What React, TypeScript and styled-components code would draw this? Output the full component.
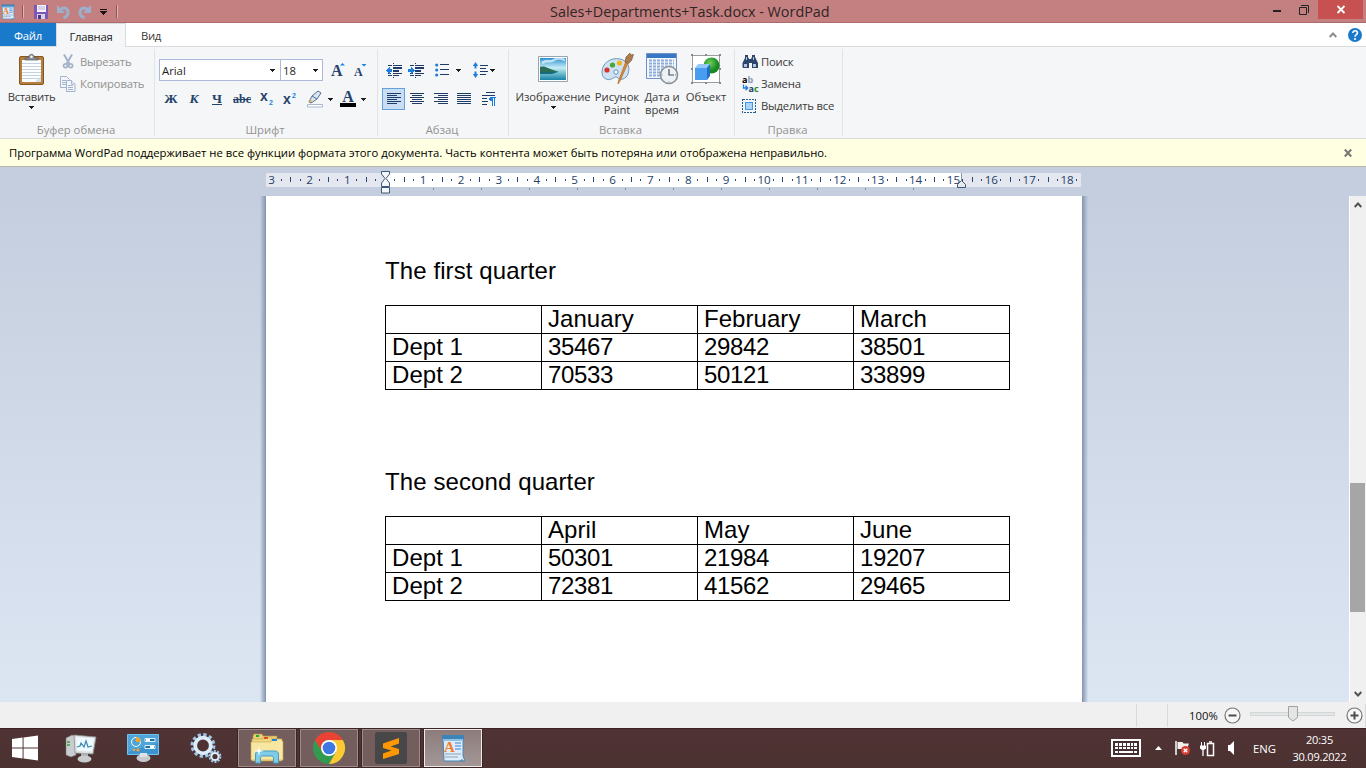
import React from "react";
import styled, { createGlobalStyle, css } from "styled-components";

const GlobalStyle = createGlobalStyle`
  * { box-sizing: border-box; }
  html, body { margin: 0; height: 100%; overflow: hidden; }
  body { font-family: "Open Sans", "Noto Sans", sans-serif; font-size: 11.3px; color: #222; }
  svg { display: block; flex: none; overflow: visible; }
`;

const Window = styled.div`
  display: flex; flex-direction: column; width: 1366px; height: 768px; overflow: hidden; background: #fff;
`;

/* Title bar */
const TitleBar = styled.header`
  display: flex; flex: none; height: 23px; background: #c48080; border-bottom: 1px solid #ad6b6c;
`;
const QuickAccess = styled.div`
  display: flex; align-items: center; width: 550px; padding: 1px 0 0 1px;
`;
const QuickItem = styled.div<{ $gap?: number }>`
  margin-left: ${(p) => p.$gap ?? 0}px;
`;
const QuickDivider = styled.i<{ $gap: number }>`
  width: 2px; height: 13px; margin: 0 0 1px ${(p) => p.$gap}px; background: #8f5556; border-right: 1px solid #e0b4b4;
`;
const WindowTitle = styled.div`
  flex: 1; padding-top: 1px; font-size: 14.4px; line-height: 22px; color: #2e2526; white-space: nowrap;
`;
const CaptionButton = styled.div<{ $width: number; $close?: boolean }>`
  display: flex; align-items: center; justify-content: center; width: ${(p) => p.$width}px;
  height: 19px; background: ${(p) => (p.$close ? "#c75050" : "transparent")};
  margin-right: ${(p) => (p.$close ? 3 : 0)}px;
`;

/* Tabs */
const TabBar = styled.nav`
  display: flex; flex: none; height: 24px; background: #fff; border-bottom: 1px solid #dadbdc;
`;
const Tab = styled.div<{ $width: number; $kind?: "file" | "active" }>`
  display: flex; align-items: center; justify-content: center; width: ${(p) => p.$width}px; height: 23px;
  padding-top: 2px; color: #3b3b3b; letter-spacing: -0.25px;
  ${(p) => p.$kind === "file" && css`background: #1979ca; color: #fff;`}
  ${(p) => p.$kind === "active" && css`
    height: 24px; padding: 1px 0 0; background: #f5f6f7; border: 1px solid #dadbdc; border-width: 1px 1px 0; color: #222;
  `}
`;
const TabTools = styled.div`
  display: flex; align-items: center; gap: 11px; margin-left: auto; padding-right: 4px;
`;

/* Ribbon */
const Ribbon = styled.section`
  display: flex; flex: none; height: 92px; background: #f5f6f7; border-bottom: 1px solid #d9dadc;
`;
const Group = styled.div<{ $width: number }>`
  display: flex; flex-direction: column; width: ${(p) => p.$width}px; height: 87px;
  margin-top: 2px; border-right: 1px solid #e2e3e4;
`;
const GroupBody = styled.div<{ $pad?: number }>`
  display: flex; height: 74px; padding-left: ${(p) => p.$pad ?? 0}px;
`;
const GroupTitle = styled.div`
  padding-right: 2px; line-height: 13px; text-align: center; color: #929292;
`;
const BigButton = styled.div<{ $width: number; $tight?: boolean }>`
  display: flex; flex-direction: column; align-items: center; width: ${(p) => p.$width}px;
  line-height: 13px; text-align: center; white-space: nowrap; color: #3b3b3b;
  letter-spacing: ${(p) => (p.$tight ? -0.3 : -0.08)}px;
`;
const BigIcon = styled.div`
  display: flex; align-items: center; justify-content: center; height: 41px; padding-bottom: 1px;
`;
const BigArrow = styled.div`
  padding-top: 3px;
`;
const SmallList = styled.div<{ $gap?: number }>`
  display: flex; flex-direction: column; padding-top: 2px; margin-left: ${(p) => p.$gap ?? 0}px;
`;
const SmallButton = styled.div<{ $disabled?: boolean; $space: number }>`
  display: flex; align-items: center; height: 22px; gap: ${(p) => p.$space}px; padding-bottom: 1px;
  white-space: nowrap; letter-spacing: -0.2px; color: ${(p) => (p.$disabled ? "#929292" : "#3b3b3b")};
`;
const ToolRows = styled.div`
  display: flex; flex-direction: column; padding-top: 10px; gap: 7px;
`;
const ToolRow = styled.div`
  display: flex; align-items: center; height: 22px;
`;
const Combo = styled.div<{ $width: number; $end: number }>`
  display: flex; align-items: center; justify-content: space-between; width: ${(p) => p.$width}px; height: 22px;
  margin-right: -1px; padding: 0 ${(p) => p.$end}px 0 2px; border: 1px solid #abbad8; background: #fff; color: #1e1e1e;
`;
const Tool = styled.div<{ $width: number; $gap?: number; $on?: boolean }>`
  display: flex; align-items: center; justify-content: center; flex: none;
  width: ${(p) => p.$width}px; height: 22px; margin-left: ${(p) => p.$gap ?? 0}px;
  ${(p) => p.$on && css`background: #c9def5; border: 1px solid #66a1dc;`}
`;
const Glyph = styled.span<{ $size?: number; $italic?: boolean; $line?: "underline" | "line-through" }>`
  font: ${(p) => (p.$italic ? "italic" : "normal")} bold ${(p) => p.$size ?? 13.5}px/16px "Liberation Serif", serif;
  color: #24426b; text-decoration: ${(p) => p.$line ?? "none"}; text-decoration-thickness: 1px;
`;

/* Notice */
const Notice = styled.div`
  display: flex; flex: none; align-items: center; justify-content: space-between; height: 28px;
  padding: 0 14px 0 9px; background: #ffffe1; border-bottom: 1px solid #b5b5a2; color: #000; white-space: nowrap;
`;

/* Ruler */
const RulerBar = styled.div`
  flex: none; height: 29px; padding: 6px 0 0 266px; background: #c5cede;
`;
const RulerTrack = styled.div`
  width: 815px; height: 14px; overflow: hidden;
  background: linear-gradient(90deg, #e4e7ef 119px, #fff 119px 695px, #e4e7ef 695px);
`;
const RulerCells = styled.div`
  display: flex; width: 900px; margin-left: -18px;
`;
const RulerCell = styled.div`
  display: grid; grid-template-columns: repeat(4, 1fr); align-items: center; justify-items: center;
  flex: none; width: 37.88px; height: 13px;
`;
const RulerTick = styled.i<{ $tall?: boolean }>`
  width: 1px; height: ${(p) => (p.$tall ? 5 : 2)}px; background: #2b466f;
`;
const RulerNumber = styled.span`
  display: flex; justify-content: center; width: 0; font-size: 11.6px; line-height: 13px; color: #24426b;
`;
const TabStops = styled.div`
  display: flex; gap: 47px; padding: 1px 0 0 167px;
`;
const TabStop = styled.i`
  width: 1px; height: 2px; background: #8291aa;
`;
const RulerWrap = styled.div`
  position: relative; width: 815px;
`;
const Marker = styled.div<{ $x: number; $y: number }>`
  position: absolute; left: ${(p) => p.$x}px; top: ${(p) => p.$y}px;
`;

/* Document */
const Workspace = styled.main`
  display: flex; flex: 1; min-height: 0; background: linear-gradient(#c5cede, #dce6f3);
`;
const PageArea = styled.div`
  display: flex; flex: 1; padding-left: 260px;
`;
const PageEdge = styled.i<{ $side: "left" | "right" }>`
  width: 6px;
  background: linear-gradient(to ${(p) => p.$side}, #8494ad, rgba(146, 163, 188, 0.8) 40%, rgba(180, 194, 214, 0.1));
`;
const Page = styled.article`
  width: 816px; padding: 61px 0 0 119px; background: #fff; color: #000;
  font-family: "Liberation Sans", Arial, sans-serif; font-size: 24px;
`;
const Heading = styled.p<{ $gap?: number }>`
  margin: ${(p) => p.$gap ?? 0}px 0 20px; line-height: 28px; letter-spacing: 0.1px;
`;
const Table = styled.div`
  display: grid; grid-template-columns: repeat(4, 156px); width: 625px;
  border-top: 1px solid #000; border-left: 1px solid #000;
`;
const Cell = styled.div<{ $numeric: boolean }>`
  height: 28px; padding-left: 6px; line-height: 25px; border-right: 1px solid #000; border-bottom: 1px solid #000;
  letter-spacing: ${(p) => (p.$numeric ? -0.35 : 0.05)}px;
`;
const ScrollBar = styled.aside`
  display: flex; flex-direction: column; align-items: center; justify-content: space-between;
  width: 17px; padding: 6px 1px 5px 0; background: #f0f0f0; border-left: 1px solid #fff;
`;
const ScrollSpace = styled.div`
  flex: 1; width: 15px; padding-top: 275px;
`;
const Thumb = styled.div`
  height: 129px; background: #a6a6a6;
`;

/* Status bar */
const StatusBar = styled.footer`
  display: flex; flex: none; align-items: center; justify-content: flex-end; height: 26px; background: #f0f0f0;
`;
const StatusDivider = styled.i<{ $before?: number; $after: number }>`
  width: 1px; height: 23px; margin: 0 ${(p) => p.$after}px 0 ${(p) => p.$before ?? 0}px; background: #d9d9d9;
`;
const ZoomText = styled.span`
  width: 35px; color: #111;
`;
const ZoomSlider = styled.div`
  position: relative; width: 85px; height: 4px; margin: 0 11px 2px 9px; background: #e3e7e8; border: 1px solid #d2d6d7;
`;
const ZoomThumb = styled.div`
  position: absolute; left: 37px; top: -7px;
`;

/* Taskbar */
const Taskbar = styled.footer`
  display: flex; flex: none; height: 40px; background: linear-gradient(#3b2325 1px, #503435 1px, #4c3131);
`;
const Launcher = styled.div<{ $width: number }>`
  display: flex; align-items: center; justify-content: center; width: ${(p) => p.$width}px; height: 40px;
`;
const TaskButton = styled.div<{ $active?: boolean }>`
  display: flex; align-items: center; justify-content: center; width: 58px; height: 38px; margin: 1px 4px 0 0;
  border: 1px solid ${(p) => (p.$active ? "#efeaea" : "#9c8c8c")};
  background: ${(p) => (p.$active ? "linear-gradient(#8d7c7c, #a39797)" : "#735d5d")};
  box-shadow: 0 0 0 1px #3d2526;
`;
const Tray = styled.div`
  display: flex; align-items: center; margin-left: auto; padding-right: 19px; color: #fff;
`;
const TrayItem = styled.div<{ $gap: number }>`
  margin-left: ${(p) => p.$gap}px;
`;
const Clock = styled.div`
  display: flex; flex-direction: column; width: 55px; margin-left: 16px; line-height: 17px; text-align: center;
  font-size: 11px; letter-spacing: -0.2px; white-space: nowrap;
`;

const navy = "#1f3b66";
const blue = "#1c7fe0";

const Caret = () => (
  <svg width="5" height="3" viewBox="0 0 5 3" shapeRendering="crispEdges"><path d="M0 0h5v1H4v1H3v1H2V2H1V1H0z" fill="#1e1e1e" /></svg>
);
const DocIcon = ({ w, h }: { w: number; h: number }) => (
  <svg width={w} height={h} viewBox="0 0 24 29" preserveAspectRatio="none">
    <path d="M2 2h20v20l2 5H3z" fill="#dcecf9" stroke="#4a87b8" strokeWidth="1" />
    <path d="M1 1h22v4H1z" fill="#3f84b9" /><path d="M2 5h20v2H2z" fill="#8fc1e4" />
    <path d="M14 9h6M14 12h6M14 15h6" stroke="#3b83d8" strokeWidth="1.2" />
    <path d="M4 20h16M4 23h13" stroke="#8ea3ba" strokeWidth="1.2" />
    <path d="M3 27h20l-2-2-3 2z" fill="#5790bb" />
    <text x="3" y="18" fontFamily="Liberation Serif" fontWeight="bold" fontSize="15" fill="#f0802c">A</text>
  </svg>
);
const SaveIcon = () => (
  <svg width="14" height="14" viewBox="0 0 14 14">
    <path d="M0 0h14v14H1l-1-1z" fill="#7c57b5" /><path d="M3 0h9v7H3z" fill="#f4f2fa" />
    <path d="M4 2h7M4 4h7" stroke="#b9b2d2" /><path d="M3 9h8v5H3z" fill="#d7d3e4" /><path d="M4 10h3v4H4z" fill="#4e3684" />
  </svg>
);
const UndoIcon = ({ flip }: { flip?: boolean }) => (
  <svg width="13" height="14" viewBox="0 0 13 14">
    <g transform={flip ? "translate(13 0) scale(-1 1)" : undefined}>
      <path d="M3.5 5C6 2 11 2.500 11 7.500 11 10 9.500 12 6.500 12.800" fill="none" stroke="#9db0cb" strokeWidth="3" />
      <path d="M0 0v8h8z" fill="#9db0cb" />
    </g>
  </svg>
);
const PasteIcon = () => (
  <svg width="25" height="31" viewBox="0 0 25 31">
    <rect x=".5" y="2.500" width="24" height="28" rx="1.500" fill="#b5803f" stroke="#85561f" />
    <path d="M3 6h19v22H3z" fill="#fdfeff" />
    <path d="M3 9.500h19M3 12.500h19M3 15.500h19M3 18.500h19M3 21.500h19M3 24.500h19" stroke="#c4d2df" />
    <path d="M16 28l6-6v6z" fill="#d5dee6" />
    <path d="M6 6V4h3.500c0-5 6-5 6 0H19v2z" fill="#8b9299" stroke="#4f555b" strokeWidth=".7" /><circle cx="12.500" cy="2.800" r="1.200" fill="#fff" />
  </svg>
);
const CutIcon = () => (
  <svg width="16" height="15" viewBox="0 0 16 15" fill="none" stroke="#a3b3cb">
    <path d="M4 0.500l5.500 9.500M12 .5L6.500 10" strokeWidth="2" /><circle cx="5.500" cy="11.800" r="1.900" strokeWidth="1.700" /><circle cx="10.700" cy="11.800" r="1.900" strokeWidth="1.700" />
  </svg>
);
const CopyIcon = () => (
  <svg width="16" height="16" viewBox="0 0 16 16" fill="#f3f6fa" stroke="#a3b3cb">
    <path d="M.5.500h6l3 3v8h-9z" /><path d="M2 4.500h4M2 6.500h4M2 8.500h4" />
    <path d="M6.500 4.500h5l3.500 3.500v7.500H6.500z" /><path d="M8 9.500h5M8 11.500h5M8 13.500h5M11.500 4.500V8H15" />
  </svg>
);
const LineIcon = ({ indent, len }: { indent: number; len: number }) => (
  <svg width="14" height="12" viewBox="0 0 14 12" shapeRendering="crispEdges" fill={navy}>
    <path d="M0 0h14v1H0zM0 4h14v1H0zM0 8h14v1H0z" />
    {[2, 6, 10].map((y) => <rect key={y} x={indent} y={y} width={len} height="1" />)}
  </svg>
);
const IndentIcon = ({ right }: { right?: boolean }) => (
  <svg width="16" height="15" viewBox="0 0 16 15" shapeRendering="crispEdges">
    <path d="M7 0h1v1H7zM7 14h1v1H7zM2 2h4v1H2zM2 12h4v1H2zM7 2h9v1H7zM7 4h9v2H7zM7 7h6v2H7zM7 10h9v1H7zM7 12h6v1H7zM2 10h3v1H2z" fill={navy} />
    <path d={right ? "M0 6h3V4h1v1h1v1h1v1h1v1H6v1H5v1H4v1H3V9H0z" : "M6 6H4V4H3v1H2v1H1v1H0v1h1v1h1v1h1v1h1V9h2z"} fill={blue} />
  </svg>
);
const BulletsIcon = () => (
  <svg width="14" height="14" viewBox="0 0 14 14"><g fill={blue}><circle cx="1.700" cy="2" r="1.600" /><circle cx="1.700" cy="7" r="1.600" /><circle cx="1.700" cy="12" r="1.600" /></g><path d="M5 1.500h9M5 6.500h9M5 11.500h9" stroke={navy} /></svg>
);
const SpacingIcon = () => (
  <svg width="15" height="16" viewBox="0 0 15 16"><path d="M2.500 0L5.200 4H3.500v2.500h-2V4H-.2zM2.500 16L5.200 12H3.500V9.500h-2V12H-.2z" fill={blue} /><path d="M7 3.500h8M7 6.500h6M7 9.500h8M7 12.500h6" stroke={navy} /></svg>
);
const ParagraphIcon = () => (
  <svg width="14" height="14" viewBox="0 0 14 14" shapeRendering="crispEdges"><path d="M4 .5h9M0 3.500h13M0 6.500h5M0 9.500h6M0 12.500h5" stroke={navy} /><path d="M8 5h6v1h-1v8h-1V6h-1v8h-1V9H8V8H7V6h1z" fill={blue} /></svg>
);
const ScriptIcon = ({ up }: { up?: boolean }) => (
  <svg width="13" height="14" viewBox="0 0 13 14">
    <text x="0" y={up ? 12 : 9} fontFamily="Liberation Sans" fontWeight="bold" fontSize="14" fill="#24426b">x</text>
    <text x="9" y={up ? 6 : 13} fontFamily="Liberation Sans" fontWeight="bold" fontSize="7" fill={blue}>2</text>
  </svg>
);
const GrowIcon = ({ down }: { down?: boolean }) => (
  <svg width="15" height="16" viewBox="0 0 15 16">
    <text x={down ? 1 : 0} y="14" fontFamily="Liberation Serif" fontWeight="bold" fontSize={down ? 12 : 16} fill="#24426b">A</text>
    <path d={down ? "M8.500 2h5L11 4.500z" : "M9 3.500h5L11.500 1z"} fill={blue} />
  </svg>
);
const PenIcon = () => (
  <svg width="16" height="17" viewBox="0 0 16 17">
    <path d="M2 11l3-6 6-5 3 2-4 6-6 4z" fill="#dce6f1" stroke="#526e96" /><path d="M5 5l5 3" stroke="#526e96" /><path d="M1.500 11.500l2-3 2 2z" fill="#e8b52e" />
    <path d="M.5 13.500h15v2.500H.5z" fill="#fff" stroke="#a7b7cf" />
  </svg>
);
const FontColorIcon = () => (
  <svg width="16" height="16" viewBox="0 0 16 16"><text x="2.200" y="11" fontFamily="Liberation Serif" fontWeight="bold" fontSize="16" fill="#24426b">A</text><path d="M0 12h16v4H0z" /></svg>
);
const PictureIcon = () => (
  <svg width="30" height="26" viewBox="0 0 30 26">
    <defs>
      <linearGradient id="sky" x2="0" y2="1"><stop stopColor="#2b90d2" /><stop offset=".45" stopColor="#c9edf8" /><stop offset=".6" stopColor="#8ed1dc" /><stop offset="1" stopColor="#1782a8" /></linearGradient>
    </defs>
    <path d="M.5.500h29v25H.5z" fill="#fff" stroke="#99a5ae" /><path d="M2 2h26v22H2z" fill="url(#sky)" />
    <path d="M2 11c4-1 5 0 8 1s7 3 11 4H2z" fill="#2a6c55" /><path d="M2 16h18l-6 2H2z" fill="#17697c" />
    <path d="M4 7c5-4 8 0 12-3s8-1 11 0" fill="none" stroke="#e9f8ff" strokeWidth="2.500" opacity=".7" />
  </svg>
);
const PaletteIcon = () => (
  <svg width="33" height="32" viewBox="0 0 33 32">
    <path d="M1 19C1 10 10 4 19 6c9 2 10 9 8 15-2 5-8 7-10 4-2-4-7 4-12 1-3-1-4-4-4-7z" fill="#cfe2f3" stroke="#6f98be" />
    <circle cx="6" cy="17" r="2.600" fill="#d9342b" /><circle cx="11.500" cy="12" r="2.600" fill="#43a93a" /><circle cx="18.500" cy="10" r="2.600" fill="#f0b323" /><circle cx="15" cy="19" r="2.200" fill="#fff" stroke="#5b8dbb" />
    <path d="M27 10L18.500 29l-1.500 2 .5-3L25 8z" fill="#dc8a35" stroke="#b2661f" strokeWidth=".7" /><path d="M24 9l1-5 4-4 .5 2 3-.5-2 6-3 3z" fill="#aa7c50" stroke="#77512e" strokeWidth=".6" />
  </svg>
);
const DateIcon = () => (
  <svg width="32" height="32" viewBox="0 0 32 32">
    <path d="M.5.500h30v25H.5z" fill="#f2f7fd" stroke="#6f91c4" /><path d="M1 1h29v4H1z" fill="#3977c5" />
    <path d="M3 7.500h25M3 10.500h25M3 13.500h25M3 16.500h25M3 19.500h25M3 22.500h25" stroke="#8fabd7" strokeWidth="1.800" strokeDasharray="3 1" />
    <circle cx="23" cy="22" r="8.500" fill="#eef2f5" stroke="#88929b" strokeWidth="1.600" /><path d="M23 16v6h5" fill="none" stroke="#43505b" strokeWidth="1.200" /><path d="M23 28.500v1M16.500 22h-1M30 22h-1" stroke="#777" />
  </svg>
);
const ObjectIcon = () => (
  <svg width="30" height="30" viewBox="0 0 30 30">
    <defs><radialGradient id="ball" cx=".4" cy=".35"><stop stopColor="#72cf5e" /><stop offset="1" stopColor="#158a20" /></radialGradient></defs>
    <path d="M1.500 1.500h27v27h-27z" fill="#fff" stroke="#9c9c9c" />
    <circle cx="20.500" cy="11.500" r="8" fill="url(#ball)" />
    <path d="M4 14h12v12H4z" fill="#499df0" /><path d="M4 14l3-4h12l-3 4z" fill="#91c8f8" /><path d="M16 14l3-4v12l-3 4z" fill="#1f6fc3" />
    <g fill="#888"><path d="M0 0h2v2H0zM28 0h2v2h-2zM0 28h2v2H0zM28 28h2v2h-2zM14 0h2v2h-2zM14 28h2v2h-2zM0 14h2v2H0zM28 14h2v2h-2z" /></g>
  </svg>
);
const FindIcon = () => (
  <svg width="16" height="13" viewBox="0 0 16 13"><path d="M3 0h3v2l1 2h2l1-2V0h3v2l3 6v5h-6V8H7v5H1l-.5-1V8L3 3z" fill="#2d456c" /><path d="M2 9h3v3H2zM11 9h3v3h-3zM4 2h1v3H4zM11 2h1v3h-1z" fill="#b5c6de" /></svg>
);
const ReplaceIcon = () => (
  <svg width="17" height="16" viewBox="0 0 17 16" fontFamily="Open Sans" fontWeight="bold" fontSize="9">
    <text x="0" y="7">a</text><text x="5.500" y="7" fill="#8b9bb1">b</text>
    <text x="6.500" y="15.500" fill="#24426b">a</text><text x="12" y="15.500" fill="#248c32">c</text>
    <path d="M1.500 8.500v3.500H5M3.500 9.800L5.800 12 3.500 14.200" fill="none" stroke={blue} strokeWidth="1.300" />
  </svg>
);
const SelectIcon = () => (
  <svg width="14" height="14" viewBox="0 0 14 14" shapeRendering="crispEdges"><path d="M.5.500h13v13H.5z" fill="none" stroke="#285d91" strokeDasharray="2 1" /><path d="M3.500 3.500h7v7h-7z" fill="#a8d5fb" stroke="#4696e0" /></svg>
);

const StartIcon = () => (
  <svg width="26" height="26" viewBox="0 0 27 26" fill="#fff"><path d="M0 3.700l11-1.600v10.400H0zM12 2l15-2v12.500H12zM0 13.500h11v10.300L0 22.300zM12 13.500h15V26l-15-2z" /></svg>
);
const MonitorIcon = () => (
  <svg width="31" height="29" viewBox="0 0 31 29">
    <path d="M0 4l6-3 4 1v19l-5 2-5-2z" fill="#c9cdd0" stroke="#777" strokeWidth=".5" /><path d="M1 8h3M1 11h3" stroke="#3ea33d" strokeWidth="1.500" />
    <path d="M8 1l22 2-3 17-18-1z" fill="#dfe2e3" stroke="#888f92" strokeWidth=".8" /><path d="M10 3l18 1.500-2 13L11 16.500z" fill="#eefaff" />
    <path d="M11 13l3-1 1-3 3 4 2-6 2 6 4-1" fill="none" stroke="#3b87ac" strokeWidth="1.200" />
    <path d="M15 19h7v4h-7z" fill="#aaafb1" /><ellipse cx="18.500" cy="25" rx="7" ry="3.500" fill="#c8cccd" />
  </svg>
);
const PanelIcon = () => (
  <svg width="33" height="28" viewBox="0 0 33 28">
    <path d="M.5.500h31v20H.5z" fill="#3b94cd" stroke="#70c1ed" /><path d="M1 1h30v8L1 18z" fill="#5cb0df" opacity=".6" />
    <circle cx="9" cy="8" r="4.500" fill="#4fa5d9" stroke="#fff" /><path d="M9 8V3a5 5 0 015 5z" fill="#f6a52a" />
    <path d="M18 4.500h10v3H18zM18 11.500h10v3H18z" fill="#246e9e" stroke="#d9f0ff" /><path d="M19 5h4v2h-4zM23 12h4v2h-4z" fill="#fff" />
    <circle cx="7" cy="16" r="1.200" fill="#f3a43b" /><circle cx="11" cy="16" r="1.600" fill="#f3a43b" />
    <ellipse cx="16.500" cy="24" rx="7" ry="4" fill="#c6cacc" /><path d="M13 19h7v4h-7z" fill="#dfe2e3" />
  </svg>
);
const GearsIcon = () => (
  <svg width="32" height="30" viewBox="0 0 32 30" fill="none">
    <circle cx="13" cy="12.500" r="10.700" stroke="#9dc6e6" strokeWidth="3.500" strokeDasharray="3.200 2.400" /><circle cx="13" cy="12.500" r="7.800" stroke="#dcecf8" strokeWidth="3.800" />
    <circle cx="25" cy="23.500" r="5.300" stroke="#9dc6e6" strokeWidth="2.200" strokeDasharray="2.100 1.200" /><circle cx="25" cy="23.500" r="3.600" stroke="#dcecf8" strokeWidth="2" />
  </svg>
);
const ExplorerIcon = () => (
  <svg width="33" height="29" viewBox="0 0 33 29">
    <path d="M2 2l1-2h8l1 2h14v20H2z" fill="#ebce72" stroke="#b59545" strokeWidth=".6" /><path d="M5 1h3v2H5z" fill="#17a94b" />
    <path d="M1 5h11l1-2h7l1 2h10v22H1z" fill="#f0d780" stroke="#c5a34d" strokeWidth=".6" /><path d="M13 3h4v2h-4z" fill="#d94c35" />
    <path d="M0 8h20l1-3h9l2 3v18H0z" fill="#f7e7a2" stroke="#c8a952" strokeWidth=".6" /><path d="M21 5h5v2h-5z" fill="#2586d6" />
    <path d="M4.500 29V21c0-3 1-4 4-4h15c3 0 4 1 4 4v8h-5v-5c0-1-1-2-2-2h-9c-1 0-2 1-2 2v5z" fill="#7fcce9" stroke="#459dc5" />
    <path d="M8 12l.8 4 4.200 1-4.200 1L8 22l-.8-4L3 17l4.200-1z" fill="#fff" />
  </svg>
);
const ChromeIcon = () => (
  <svg width="32" height="32" viewBox="0 0 32 32">
    <circle cx="16" cy="16" r="16" fill="#349a50" />
    <path d="M29.860 8H16a8 8 0 00-6.930 12L2.140 8a16 16 0 0127.720 0z" fill="#ea4335" />
    <path d="M22.930 20L16 32a16 16 0 0013.860-24H16z" fill="#fcc934" />
    <circle cx="16" cy="16" r="8" fill="#fff" /><circle cx="16" cy="16" r="6.300" fill="#3f78e2" />
  </svg>
);
const SublimeIcon = () => (
  <svg width="32" height="32" viewBox="0 0 32 32"><rect width="32" height="32" rx="2.500" fill="#474747" /><path d="M8 11.500L24 6v5.500L15.500 14.500 24 17v5L8 27v-5.500l8.500-3L8 16z" fill="#ff9800" /></svg>
);
const KeyboardIcon = () => (
  <svg width="30" height="18" viewBox="0 0 30 18" shapeRendering="crispEdges"><path d="M1 1h28v16H1z" fill="#453031" stroke="#fff" strokeWidth="2" /><path d="M4 4h3v3H4zM8 4h3v3H8zM12 4h3v3h-3zM16 4h3v3h-3zM20 4h2v3h-2zM23 4h3v3h-3zM4 8h3v2H4zM8 8h3v2H8zM12 8h3v2h-3zM16 8h3v2h-3zM20 8h2v2h-2zM23 8h3v2h-3zM4 12h3v2H4zM8 12h14v2H8zM23 12h3v2h-3z" fill="#fff" /></svg>
);
const FlagIcon = () => (
  <svg width="16" height="16" viewBox="0 0 16 16"><path d="M1 1v14" stroke="#fff" strokeWidth="1.500" /><path d="M2.500 2h5l1 1.500H14l-1 3 1 3.500H8L7 9H2.500z" fill="#f2efef" /><circle cx="10.500" cy="10.500" r="4.500" fill="#d73a2f" /><path d="M8.700 8.700l3.600 3.600M12.300 8.700l-3.600 3.600" stroke="#fff" strokeWidth="1.400" /></svg>
);
const BatteryIcon = () => (
  <svg width="15" height="15" viewBox="0 0 15 15" fill="none" stroke="#fff"><path d="M1.500 1v4M4.500 1v4" /><path d="M0 4.500h6v3L4 9H2L0 7.500z" fill="#fff" stroke="none" /><path d="M3 8v7" strokeWidth="1.300" /><path d="M7.500 2.500h6v12h-6z" strokeWidth="1.500" /><path d="M9 1h3" strokeWidth="1.500" /></svg>
);
const ZoomKnob = ({ plus }: { plus?: boolean }) => (
  <svg width="17" height="17" viewBox="0 0 17 17" fill="none"><circle cx="8.500" cy="8.500" r="7.500" fill="#f7f7f7" stroke="#777" strokeWidth="1.200" /><path d={plus ? "M4.500 8.500h8M8.500 4.500v8" : "M4.500 8.500h8"} stroke="#4d4d4d" strokeWidth="2" /></svg>
);

const notice =
  "Программа WordPad поддерживает не все функции формата этого документа. Часть контента может быть потеряна или отображена неправильно.";
const firstQuarter = ["", "January", "February", "March", "Dept 1", "35467", "29842", "38501", "Dept 2", "70533", "50121", "33899"];
const secondQuarter = ["", "April", "May", "June", "Dept 1", "50301", "21984", "19207", "Dept 2", "72381", "41562", "29465"];
const centimetres = Array.from({ length: 22 }, (_, i) => i - 3);

function Ruler() {
  return (
    <RulerBar>
      <RulerWrap>
        <RulerTrack>
          <RulerCells>
            {centimetres.map((n) => (
              <RulerCell key={n}>
                <RulerTick $tall /><RulerTick />
                <RulerNumber>{n === 0 ? "" : Math.abs(n)}</RulerNumber>
                <RulerTick />
              </RulerCell>
            ))}
          </RulerCells>
        </RulerTrack>
        <TabStops>{Array.from({ length: 11 }, (_, i) => <TabStop key={i} />)}</TabStops>
        <Marker $x={115} $y={-2}>
          <svg width="9" height="23" viewBox="0 0 9 23" fill="#f4f6f8" stroke="#3d5878">
            <path d="M.5.500h8V3L5 7.500 8.500 12v3.500h-8V12L4 7.500.5 3z" /><path d="M.5 16.500h8v5.500h-8z" />
          </svg>
        </Marker>
        <Marker $x={691} $y={0}>
          <svg width="9" height="15" viewBox="0 0 9 15"><path d="M4.500 0v7" stroke="#8b98a8" /><path d="M4.500 7.500l4 4v3h-8v-3z" fill="#e8ebee" stroke="#3d5878" /></svg>
        </Marker>
      </RulerWrap>
    </RulerBar>
  );
}

function DataTable({ values }: { values: string[] }) {
  return <Table>{values.map((value, i) => <Cell key={i} $numeric={/^\d/.test(value)}>{value}</Cell>)}</Table>;
}

export default function App() {
  return (
    <>
      <GlobalStyle />
      <Window>
        <TitleBar>
          <QuickAccess>
            <QuickItem><DocIcon w={14} h={16} /></QuickItem>
            <QuickDivider $gap={7} />
            <QuickItem $gap={10}><SaveIcon /></QuickItem>
            <QuickItem $gap={9}><UndoIcon /></QuickItem>
            <QuickItem $gap={8}><UndoIcon flip /></QuickItem>
            <QuickItem $gap={9}>
              <svg width="7" height="6" viewBox="0 0 7 6" shapeRendering="crispEdges"><path d="M0 0h7v1H0zM0 2h7v1H6v1H5v1H4v1H3V5H2V4H1V3H0z" fill="#1b1315" /></svg>
            </QuickItem>
            <QuickDivider $gap={9} />
          </QuickAccess>
          <WindowTitle>Sales+Departments+Task.docx - WordPad</WindowTitle>
          <CaptionButton $width={26}><svg width="8" height="7" viewBox="0 0 8 7"><path d="M0 4h8v2H0z" fill="#222" /></svg></CaptionButton>
          <CaptionButton $width={28}>
            <svg width="10" height="10" viewBox="0 0 10 10" fill="none" stroke="#222"><path d="M.5 2.500h7v7h-7z" /><path d="M2 .5h7.500V8" /></svg>
          </CaptionButton>
          <CaptionButton $width={45} $close>
            <svg width="8" height="7" viewBox="0 0 8 7"><path d="M.5 0l7 7M7.500 0l-7 7" stroke="#fff" strokeWidth="1.800" /></svg>
          </CaptionButton>
        </TitleBar>

        <TabBar>
          <Tab $width={56} $kind="file">Файл</Tab>
          <Tab $width={70} $kind="active">Главная</Tab>
          <Tab $width={50}>Вид</Tab>
          <TabTools>
            <svg width="8" height="6" viewBox="0 0 8 6"><path d="M.7 5L4 1.500 7.300 5" fill="none" stroke="#8b8b8b" strokeWidth="1.900" /></svg>
            <svg width="14" height="14" viewBox="0 0 14 14">
              <circle cx="7" cy="7" r="7" fill="#1979ca" />
              <path d="M4.800 5c0-3 4.600-2.800 4.600 0 0 1.700-2.300 1.700-2.300 3.700" fill="none" stroke="#fff" strokeWidth="1.600" /><circle cx="7" cy="11" r="1.100" fill="#fff" />
            </svg>
          </TabTools>
        </TabBar>

        <Ribbon>
          <Group $width={155}>
            <GroupBody $pad={7}>
              <BigButton $width={49} $tight><BigIcon><PasteIcon /></BigIcon>Вставить<BigArrow><Caret /></BigArrow></BigButton>
              <SmallList $gap={4}>
                <SmallButton $disabled $space={4}><CutIcon />Вырезать</SmallButton>
                <SmallButton $disabled $space={4}><CopyIcon />Копировать</SmallButton>
              </SmallList>
            </GroupBody>
            <GroupTitle>Буфер обмена</GroupTitle>
          </Group>

          <Group $width={223}>
            <GroupBody $pad={4}>
              <ToolRows>
                <ToolRow>
                  <Combo $width={122} $end={5}>Arial<Caret /></Combo>
                  <Combo $width={43} $end={4}>18<Caret /></Combo>
                  <Tool $width={22} $gap={5}><GrowIcon /></Tool>
                  <Tool $width={22}><GrowIcon down /></Tool>
                </ToolRow>
                <ToolRow>
                  <Tool $width={24}><Glyph>Ж</Glyph></Tool>
                  <Tool $width={22}><Glyph $italic>К</Glyph></Tool>
                  <Tool $width={24}><Glyph $line="underline">Ч</Glyph></Tool>
                  <Tool $width={26}><Glyph $size={12} $line="line-through">abc</Glyph></Tool>
                  <Tool $width={22}><ScriptIcon /></Tool>
                  <Tool $width={24}><ScriptIcon up /></Tool>
                  <Tool $width={26} $gap={1}><PenIcon /></Tool>
                  <Tool $width={4}><Caret /></Tool>
                  <Tool $width={28} $gap={2}><FontColorIcon /></Tool>
                  <Tool $width={2}><Caret /></Tool>
                </ToolRow>
              </ToolRows>
            </GroupBody>
            <GroupTitle>Шрифт</GroupTitle>
          </Group>

          <Group $width={131}>
            <GroupBody $pad={4}>
              <ToolRows>
                <ToolRow>
                  <Tool $width={22} $gap={1}><IndentIcon /></Tool>
                  <Tool $width={22}><IndentIcon right /></Tool>
                  <Tool $width={24} $gap={3}><BulletsIcon /></Tool>
                  <Tool $width={9}><Caret /></Tool>
                  <Tool $width={18} $gap={8}><SpacingIcon /></Tool>
                  <Tool $width={7}><Caret /></Tool>
                </ToolRow>
                <ToolRow>
                  <Tool $width={23} $on><LineIcon indent={0} len={10} /></Tool>
                  <Tool $width={24}><LineIcon indent={2} len={10} /></Tool>
                  <Tool $width={24}><LineIcon indent={4} len={10} /></Tool>
                  <Tool $width={22}><LineIcon indent={0} len={14} /></Tool>
                  <Tool $width={24} $gap={2}><ParagraphIcon /></Tool>
                </ToolRow>
              </ToolRows>
            </GroupBody>
            <GroupTitle>Абзац</GroupTitle>
          </Group>

          <Group $width={226}>
            <GroupBody $pad={4}>
              <BigButton $width={80}><BigIcon><PictureIcon /></BigIcon>Изображение<BigArrow><Caret /></BigArrow></BigButton>
              <BigButton $width={48}><BigIcon><PaletteIcon /></BigIcon><span>Рисунок</span><span>Paint</span></BigButton>
              <BigButton $width={42}><BigIcon><DateIcon /></BigIcon><span>Дата и</span><span>время</span></BigButton>
              <BigButton $width={46}><BigIcon><ObjectIcon /></BigIcon>Объект</BigButton>
            </GroupBody>
            <GroupTitle>Вставка</GroupTitle>
          </Group>

          <Group $width={108}>
            <GroupBody $pad={7}>
              <SmallList>
                <SmallButton $space={3}><FindIcon />Поиск</SmallButton>
                <SmallButton $space={2}><ReplaceIcon />Замена</SmallButton>
                <SmallButton $space={5}><SelectIcon />Выделить все</SmallButton>
              </SmallList>
            </GroupBody>
            <GroupTitle>Правка</GroupTitle>
          </Group>
        </Ribbon>

        <Notice>
          {notice}
          <svg width="8" height="8" viewBox="0 0 8 8"><path d="M.8.500l6.400 7M7.200.500l-6.400 7" stroke="#777" strokeWidth="2" /></svg>
        </Notice>

        <Ruler />

        <Workspace>
          <PageArea>
            <PageEdge $side="left" />
            <Page>
              <Heading>The first quarter</Heading>
              <DataTable values={firstQuarter} />
              <Heading $gap={78}>The second quarter</Heading>
              <DataTable values={secondQuarter} />
            </Page>
            <PageEdge $side="right" />
          </PageArea>
          <ScrollBar>
            <svg width="8" height="6" viewBox="0 0 8 6"><path d="M.7 5L4 1.500 7.300 5" fill="none" stroke="#505050" strokeWidth="1.900" /></svg>
            <ScrollSpace><Thumb /></ScrollSpace>
            <svg width="8" height="6" viewBox="0 0 8 6"><path d="M.7 1L4 4.500 7.300 1" fill="none" stroke="#505050" strokeWidth="1.900" /></svg>
          </ScrollBar>
        </Workspace>

        <StatusBar>
          <StatusDivider $after={30} />
          <StatusDivider $after={21} />
          <ZoomText>100%</ZoomText>
          <ZoomKnob />
          <ZoomSlider>
            <ZoomThumb>
              <svg width="10" height="16" viewBox="0 0 10 16"><path d="M.5.500h9v11L5 15 .5 11.500z" fill="#e5e5e5" stroke="#a1a1a1" /></svg>
            </ZoomThumb>
          </ZoomSlider>
          <ZoomKnob plus />
          <StatusDivider $before={2} $after={0} />
        </StatusBar>

        <Taskbar>
          <Launcher $width={50}><StartIcon /></Launcher>
          <Launcher $width={62}><MonitorIcon /></Launcher>
          <Launcher $width={62}><PanelIcon /></Launcher>
          <Launcher $width={64}><GearsIcon /></Launcher>
          <TaskButton><ExplorerIcon /></TaskButton>
          <TaskButton><ChromeIcon /></TaskButton>
          <TaskButton><SublimeIcon /></TaskButton>
          <TaskButton $active><DocIcon w={24} h={29} /></TaskButton>
          <Tray>
            <KeyboardIcon />
            <TrayItem $gap={14}><svg width="7" height="4" viewBox="0 0 7 4"><path d="M0 4l3.500-4L7 4z" fill="#fff" /></svg></TrayItem>
            <TrayItem $gap={13}><FlagIcon /></TrayItem>
            <TrayItem $gap={9}><BatteryIcon /></TrayItem>
            <TrayItem $gap={13}><svg width="7" height="14" viewBox="0 0 7 14"><path d="M0 4h2l4-4v14l-4-4H0z" fill="#fff" /></svg></TrayItem>
            <TrayItem $gap={18}>ENG</TrayItem>
            <Clock><span>20:35</span><span>30.09.2022</span></Clock>
          </Tray>
        </Taskbar>
      </Window>
    </>
  );
}
